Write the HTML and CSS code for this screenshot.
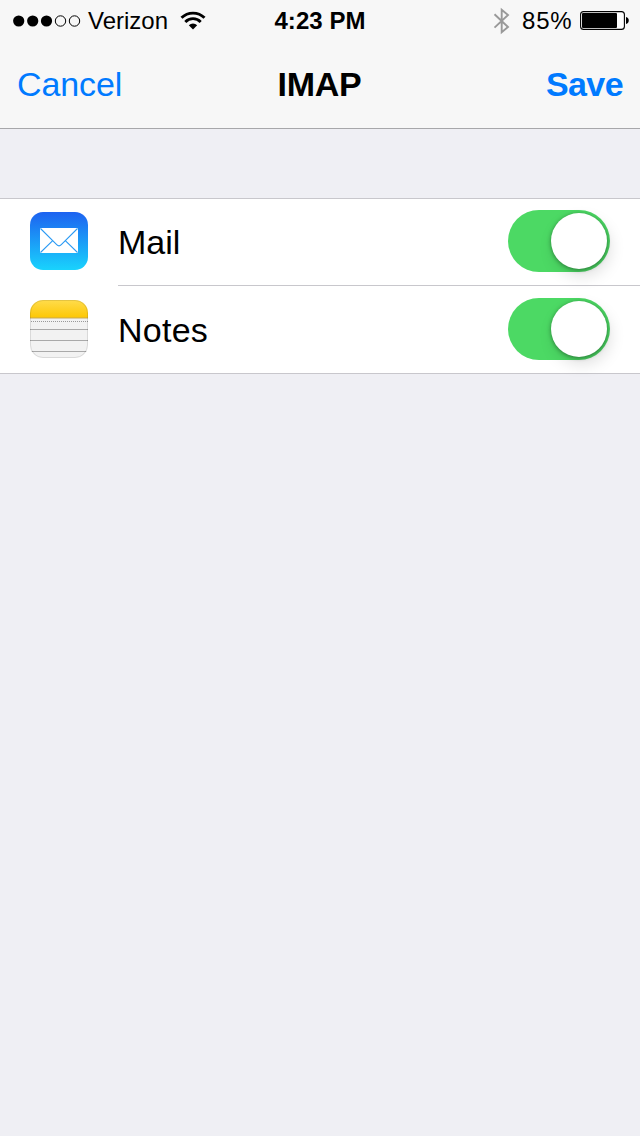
FILE: index.html
```html
<!DOCTYPE html>
<html lang="en">
<head>
<meta charset="utf-8">
<title>IMAP</title>
<link rel="stylesheet" href="styles.css">
</head>
<body>
<header class="top">
  <div class="status">
    <div class="status-left">
      <svg class="signal" width="68" height="12" viewBox="0 0 68 12">
        <g fill="#000"><circle cx="5.7" cy="6" r="5.6"/><circle cx="19.7" cy="6" r="5.6"/><circle cx="33.5" cy="6" r="5.6"/></g>
        <g fill="none" stroke="#000" stroke-width="1"><circle cx="47.5" cy="6" r="5.2"/><circle cx="61.5" cy="6" r="5.2"/></g>
      </svg>
      <span class="carrier">Verizon</span>
      <svg class="wifi" width="26" height="19" viewBox="0 0 26 19">
        <g fill="none" stroke="#000" stroke-width="2.9"><path d="M1.5 6.8A16.4 16.4 0 0 1 24.5 6.8"/><path d="M5.3 10.9A10.8 10.8 0 0 1 20.7 10.9"/></g>
        <path d="M8.8 14.3A6 6 0 0 1 17.2 14.3L13 18.6Z"/>
      </svg>
    </div>
    <span class="time">4:23 PM</span>
    <div class="status-right">
      <svg class="bluetooth" width="18" height="28" viewBox="0 0 18 28">
        <path d="M1.5 7.2L15 20L8.7 25.2V2.8L15 8L1.5 20.6" fill="none" stroke="#999" stroke-width="1.9"/>
      </svg>
      <span class="percent">85%</span>
      <svg class="battery" width="50" height="20" viewBox="0 0 50 20">
        <rect x=".6" y=".6" width="43.8" height="17.8" rx="3" fill="#fff" stroke="#000" stroke-width="1.1"/>
        <rect x="2" y="2" width="35" height="15" rx="1"/>
        <path d="M46 6C49.7 6.5 49.7 12.5 46 13Z"/>
      </svg>
    </div>
  </div>
  <nav class="nav">
    <a class="cancel">Cancel</a>
    <h1 class="title">IMAP</h1>
    <a class="save">Save</a>
  </nav>
</header>
<main class="list">
  <div class="row">
    <svg class="icon" width="58" height="58" viewBox="0 0 58 58">
      <defs><linearGradient id="sky" x2="0" y2="1"><stop stop-color="#1d62f0"/><stop offset="1" stop-color="#19d3fd"/></linearGradient></defs>
      <rect width="58" height="58" rx="13" fill="url(#sky)"/>
      <rect x="10" y="16" width="38" height="25" rx=".7" fill="#fff"/>
      <path d="M10.5 16.5L26.7 32.7Q29 35 31.3 32.7L47.5 16.5M10.5 40.5L22.7 28.7M47.5 40.5L35.3 28.7" fill="none" stroke="#2b9af4" stroke-width="1.1"/>
    </svg>
    <div class="body">
      <span class="label">Mail</span>
      <span class="switch"><span class="knob"></span></span>
    </div>
  </div>
  <div class="row">
    <svg class="icon" width="58" height="58" viewBox="0 0 58 58">
      <defs>
        <linearGradient id="gold" x2="0" y2="1"><stop stop-color="#ffdc4c"/><stop offset="1" stop-color="#fdc703"/></linearGradient>
        <clipPath id="tile"><rect width="58" height="58" rx="13"/></clipPath>
      </defs>
      <g clip-path="url(#tile)">
        <rect width="58" height="58" fill="#f2f2f2"/>
        <rect width="58" height="18" fill="url(#gold)"/>
        <path d="M0 18H58" stroke="#c7a954" stroke-width="1"/>
        <path d="M1 21.5H58" stroke="#999" stroke-width="1" stroke-dasharray="1 1"/>
        <path d="M0 29.5H58M0 40.5H58M0 51.5H58" stroke="#a9a9a9" stroke-width="1"/>
      </g>
      <rect x=".5" y=".5" width="57" height="57" rx="12.5" fill="none" stroke="#000" stroke-opacity=".1"/>
    </svg>
    <div class="body body-last">
      <span class="label label-notes">Notes</span>
      <span class="switch"><span class="knob"></span></span>
    </div>
  </div>
</main>
</body>
</html>
```
FILE: styles.css
```css
* { box-sizing: border-box; }
body {
  margin: 0;
  min-height: 1136px;
  background: #efeff4;
  color: #000;
  font-family: "Liberation Sans", Arial, sans-serif;
  font-size: 34px;
}
svg { display: block; flex: none; }
.top {
  height: 129px;
  background: #f7f7f7;
  border-bottom: 1px solid #a7a7aa;
}
.status {
  display: grid;
  grid-template-columns: 1fr auto 1fr;
  height: 40px;
  padding: 0 10px 0 13px;
  font-size: 24px;
  line-height: 41px;
}
.status-left, .status-right { display: flex; align-items: flex-start; }
.status-right { justify-content: flex-end; }
.signal { margin-top: 14.5px; }
.carrier { margin-left: 7px; letter-spacing: 0; }
.wifi { margin: 10.5px 0 0 12px; }
.time {
  margin-left: -3px;
  font-weight: bold;
  font-size: 24px;
  line-height: 42px;
  letter-spacing: .05px;
}
.bluetooth { margin: 6.5px 11px 0 0; }
.percent { width: 58px; letter-spacing: .8px; }
.battery { margin-top: 11px; }
.nav {
  display: grid;
  grid-template-columns: 1fr auto 1fr;
  height: 88px;
  padding: 0 17px;
  line-height: 88px;
}
.cancel, .save { color: #007aff; }
.cancel { letter-spacing: -.1px; }
.save { text-align: right; font-weight: bold; letter-spacing: -.6px; }
.title { margin: 0 0 0 -1px; font-size: 34px; letter-spacing: -.3px; }
.list {
  margin-top: 69px;
  background: #fff;
  border-top: 1px solid #c8c7cc;
  border-bottom: 1px solid #c8c7cc;
}
.row { display: flex; height: 87px; padding-left: 30px; }
.row + .row { padding-top: 1px; }
.icon { margin-top: 13px; }
.body {
  display: flex;
  flex: 1;
  justify-content: space-between;
  margin-left: 30px;
  padding: 11px 30px 0 0;
  border-bottom: 1px solid #c8c7cc;
}
.body-last { border-bottom: 0; }
.label { line-height: 64px; }
.label-notes { letter-spacing: .25px; }
.switch {
  width: 102px;
  height: 62px;
  padding: 3px;
  display: flex;
  justify-content: flex-end;
  border-radius: 31px;
  background: #4cd964;
}
.knob {
  width: 56px;
  height: 56px;
  border-radius: 50%;
  background: #fff;
  box-shadow: 0 1px 4px rgba(0,0,0,.38), 3px 7px 16px rgba(0,0,0,.13);
}
```
